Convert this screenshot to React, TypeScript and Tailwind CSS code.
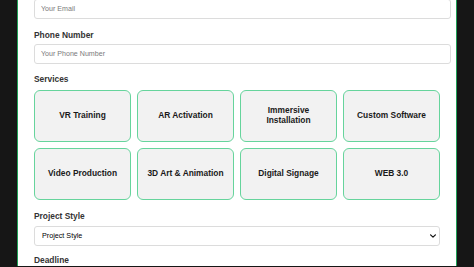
import { useState } from 'react'

const services = [
  'VR Training',
  'AR Activation',
  'Immersive Installation',
  'Custom Software',
  'Video Production',
  '3D Art & Animation',
  'Digital Signage',
  'WEB 3.0',
]

export default function App() {
  const [selected, setSelected] = useState<string[]>([])

  const toggle = (s: string) =>
    setSelected((prev) => (prev.includes(s) ? prev.filter((x) => x !== s) : [...prev, s]))

  return (
    <div className="w-[474px] h-[267px] overflow-hidden bg-[#161616] font-['Liberation_Sans',Arial,sans-serif]">
      <div className="ml-[17px] w-[440px] h-full bg-white border-x border-[#1f9f55] pl-[16px] pr-[4px]">
        {/* Email */}
        <input
          type="email"
          placeholder="Your Email"
          className="block -mt-px w-[417px] h-[20px] px-[6px] text-[7.1px] text-[#333] placeholder:text-[#7a7a7a] border border-[#dcdcdc] rounded-[3px] outline-none"
        />

        {/* Phone */}
        <label className="block mt-[10px] mb-[3px] text-[8.4px] leading-[12px] font-bold text-[#333]">
          Phone Number
        </label>
        <input
          type="tel"
          placeholder="Your Phone Number"
          className="block w-[417px] h-[20px] px-[6px] text-[7.1px] text-[#333] placeholder:text-[#7a7a7a] border border-[#dcdcdc] rounded-[3px] outline-none"
        />

        {/* Services */}
        <label className="block mt-[9px] mb-[5px] text-[8.4px] leading-[12px] font-bold text-[#333]">
          Services
        </label>
        <div className="grid grid-cols-4 gap-[6px] w-[406px]">
          {services.map((s) => (
            <button
              key={s}
              onClick={() => toggle(s)}
              className={`h-[52px] px-[4px] flex items-center justify-center text-center rounded-[6px] border-[1.5px] border-[#66d49c] text-[8.4px] leading-[9.6px] font-bold text-[#1a1a1a] ${
                selected.includes(s) ? 'bg-[#dff5e9]' : 'bg-[#f2f2f2]'
              }`}
            >
              {s === 'Immersive Installation' ? (
                <span>
                  Immersive
                  <br />
                  Installation
                </span>
              ) : (
                s
              )}
            </button>
          ))}
        </div>

        {/* Project style */}
        <label className="block mt-[10px] mb-[4px] text-[8.4px] leading-[12px] font-bold text-[#333]">
          Project Style
        </label>
        <div className="relative w-[406px]">
          <select className="block appearance-none w-full h-[20px] pl-[7px] pr-[16px] text-[7.2px] text-black bg-white border border-[#dcdcdc] rounded-[3px] outline-none">
            <option>Project Style</option>
            <option>Futuristic</option>
            <option>Minimal</option>
            <option>Playful</option>
          </select>
          <svg
            viewBox="0 0 10 6"
            className="absolute right-[4px] top-[8px] w-[6px] h-[4px] pointer-events-none"
          >
            <path d="M1 1l4 4 4-4" fill="none" stroke="#111" strokeWidth="2" strokeLinecap="round" strokeLinejoin="round" />
          </svg>
        </div>

        {/* Deadline */}
        <label className="block mt-[8px] text-[8.4px] leading-[12px] font-bold text-[#333]">
          Deadline
        </label>
      </div>
    </div>
  )
}
